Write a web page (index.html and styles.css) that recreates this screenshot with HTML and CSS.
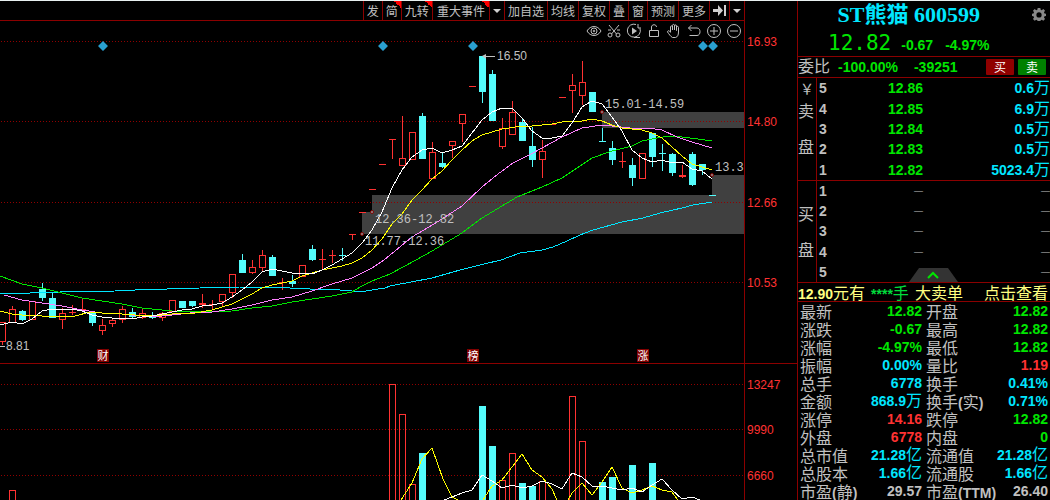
FILE: index.html
```html
<!DOCTYPE html>
<html lang="zh-CN">
<head>
<meta charset="utf-8">
<title>ST熊猫 600599</title>
<link rel="stylesheet" href="styles.css">
</head>
<body>
<div class="app">
  <main class="main">
    <nav class="toolbar">
      <button>发</button>
      <button class="hot">简</button>
      <button class="hot">九转</button>
      <button class="hot wide">重大事件</button>
      <button class="drop" aria-label="更多事件"><svg viewBox="0 0 8 4"><path d="M0 0h8L4 4z"/></svg></button>
      <button>加自选</button>
      <button>均线</button>
      <button>复权</button>
      <button>叠</button>
      <button>窗</button>
      <button>预测</button>
      <button>更多</button>
      <button class="jump" aria-label="跳到末尾"><svg viewBox="0 0 13 11"><path d="M0 4h5V0l5 5.500-5 5.500V7H0zM11 0h2v11h-2z"/></svg></button>
      <button class="drop" aria-label="展开"><svg viewBox="0 0 8 4"><path d="M0 0h8L4 4z"/></svg></button>
    </nav>

    <section class="price">
      <svg class="chart" viewBox="0 21 797 342">
        <g class="gap">
          <path d="M602 112h142v16H602zM712 175h32v20h-32zM372 195h372v39H362v-22h10z"/>
        </g>
        <g class="grid"><path d="M1 41.500H744M1 121.500H744M1 202.500H744M1 282.500H744"/></g>
        <g id="candles"></g>
        <g class="ma">
          <polyline class="c60" points="0,294 30,293 60,292 115,291 135,290 200,288 240,287 265,287 290,288 310,289 340,290 352,291 366,291 372,290 385,288 390,286 432,278 460,270 480,265 501,260 520,253 542,250 553,247 567,241 580,235 593,230 622,222 643,218 660,213 682,208 693,205 712,202"/>
          <polyline class="c30" points="0,276 22,284 42,288 62,293 82,298 102,301 122,304 142,308 172,311 190,312 232,311 252,308 272,306 292,302 312,299 332,296 352,292 362,286 372,281 390,274 416,260 432,251 442,245 462,233 482,218 502,206 517,197 542,187 562,178 580,166 592,158 612,151 632,146 642,141 652,139 668,136 682,137 698,139 712,141"/>
          <polyline class="c20" points="4,295 22,300 42,303 62,306 82,310 102,313 122,314 142,316 162,316 172,315 190,313 212,312 232,309 252,305 272,300 292,297 312,291 332,284 352,278 372,268 384,260 412,237 434,224 462,206 482,187 498,174 513,163 533,153 542,148 562,137 582,128 602,125 612,126 630,128 647,128 662,130 677,137 692,142 712,148"/>
          <polyline class="c10" points="0,311 12,314 22,315 42,316 62,317 75,316 90,312 102,313 122,314 135,315 152,316 172,314 195,313 212,310 222,307 232,304 242,299 252,294 262,288 272,285 282,283 292,281 302,276 312,273 322,270 332,268 342,266 352,263 362,258 372,250 382,239 392,224 402,214 412,200 422,190 432,179 442,171 452,160 462,150 472,141 482,135 502,129 522,126 532,126 542,125 552,124 562,122 582,121 592,119 602,121 612,125 622,128 632,129 642,130 652,133 662,138 672,147 682,156 692,164 702,167 712,170"/>
          <polyline class="c5" points="0,325 12,322 22,324 32,319 42,311 52,309 62,310 72,309 82,311 92,315 102,317 112,318 122,318 132,319 142,317 152,316 162,314 172,312 182,310 192,309 202,306 212,305 222,303 232,297 242,290 252,282 262,272 272,269 282,271 292,273 302,273 312,274 322,270 332,265 342,259 352,253 362,243 372,230 382,212 392,188 402,170 412,157 422,150 432,148 442,153 452,150 462,146 472,133 482,120 492,112 502,108 512,108 522,118 532,131 542,138 552,138 562,136 572,123 582,107 592,101 602,104 612,117 622,131 632,150 642,158 652,162 662,160 672,163 682,162 692,169 702,171 712,179"/>
        </g>
        <g class="dots">
          <circle cx="362" cy="234" r="1.500"/><circle cx="372" cy="212" r="1.500"/><circle cx="602" cy="112" r="1.500"/><circle cx="712" cy="175" r="1.500"/>
        </g>
        <g class="diamonds">
          <path d="M103 41l5 5-5 5-5-5zM383 41l5 5-5 5-5-5zM473 41l5 5-5 5-5-5zM703 41l5 5-5 5-5-5zM713 41l5 5-5 5-5-5z"/>
        </g>
        <g class="mark"><path class="lead" d="M484 56.500h11M0 346.500h5"/><path d="M482 56l4-2v5z"/>
          <text x="497" y="60">16.50</text><text x="6" y="350">8.81</text></g>
        <g class="gap-label">
          <text x="605" y="108">15.01-14.59</text><text x="375" y="223">12.36-12.82</text><text x="365" y="245">11.77-12.36</text><text x="715" y="171">13.3</text>
        </g>
        <g class="events">
          <path d="M97 349h12v13H97zM467 349h12v13h-12zM637 349h12v13h-12z"/>
          <text x="103" y="360">财</text><text x="473" y="360">榜</text><text x="643" y="360">涨</text>
        </g>
        <path class="frame" d="M744.500 21V363"/>
        <g class="axis"><text x="747" y="46">16.93</text><text x="747" y="126">14.80</text><text x="747" y="207">12.66</text><text x="747" y="287">10.53</text></g>
      </svg>
      <div class="tools">
        <button aria-label="显示"><svg viewBox="0 0 16 16"><path d="M1 8c3.500-6 10.500-6 14 0-3.500 6-10.500 6-14 0z"/><circle cx="8" cy="8" r="3"/><circle cx="8" cy="8" r=".8"/></svg></button>
        <button aria-label="剪切"><svg viewBox="0 0 16 16"><path d="M3 2l7.500 9M13 2L5.500 11M2 7h3M11 7h3"/><circle cx="4" cy="12" r="2"/><circle cx="12" cy="12" r="2"/></svg></button>
        <button aria-label="回放"><svg viewBox="0 0 16 16"><path d="M10 1.500A6.500 6.500 0 1 0 14 5.500M12 1v4h3M8 14.500h6"/><path class="solid" d="M6 4.500v7l5-3.500z"/></svg></button>
        <button aria-label="锁定"><svg viewBox="0 0 16 16"><path d="M3.500 7.500h9v6h-9zM5.500 7.500V4c0-3 5-3 5 0"/></svg></button>
        <button aria-label="拖动"><svg viewBox="0 0 16 16"><path d="M4.500 9V4c0-1.500 2-1.500 2 0v3-4.500c0-1.500 2-1.500 2 0V7 3c0-1.500 2-1.500 2 0v4.500-3c0-1.500 2-1.500 2 0V9c0 3-1 5-3 5.500H6.500C4.500 13.500 3 11 1.500 9c0-2 2-1.500 3 .5"/></svg></button>
        <button aria-label="撤销"><svg viewBox="0 0 16 16"><path d="M5.500 2L2.500 5l3 3M2.500 5H11c4 0 4 7.500 0 7.500H3.500"/></svg></button>
        <button aria-label="放大"><svg viewBox="0 0 16 16"><circle cx="8" cy="8" r="6.500"/><path d="M4 8h8M8 4v8"/></svg></button>
        <button aria-label="缩小"><svg viewBox="0 0 16 16"><circle cx="8" cy="8" r="6.500"/><path d="M4 8h8"/></svg></button>
      </div>
    </section>

    <section class="volume">
      <svg class="chart" viewBox="0 364 797 136">
        <g class="grid"><path d="M1 384.500H744M1 429.500H744M1 475.500H744"/></g>
        <g id="bars"></g>
        <g class="ma">
          <polyline class="c10" points="401,500 412,483 422,459 432,448 443,479 452,497 458,500"/>
          <polyline class="c10" points="483,500 492,486 502,480 522,454 532,470 542,477 552,489 557,500"/>
          <polyline class="c10" points="568,500 572,493 582,483 592,495 602,482 612,467 622,488 632,493 642,490 652,486 662,490 672,492 678,500"/>
          <polyline class="c5" points="444,500 452,497 462,493 472,490 482,475 492,481 502,488 512,485 522,488 532,486 542,481 552,484 562,489 572,473 582,477 592,486 602,486 612,488 622,490 632,488 642,492 652,485 662,479 672,490 682,499 692,497 700,500"/>
        </g>
        <path class="frame" d="M744.500 364V500"/>
        <g class="axis"><text x="747" y="389">13247</text><text x="747" y="434">9990</text><text x="747" y="480">6660</text></g>
      </svg>
    </section>
  </main>

  <aside class="side">
    <header class="quote">
      <h1>ST熊猫 600599</h1>
      <button class="gear" aria-label="设置"><svg viewBox="0 0 16 16"><path fill-rule="evenodd" d="M6.500 1h3l.4 2 1.300.6 1.700-1.200 2 2-1.200 1.700.6 1.300 1.700.3v2.600l-1.700.4-.6 1.300 1.200 1.700-2 2-1.700-1.200-1.300.6-.4 1.900h-3l-.4-1.900-1.300-.6-1.700 1.200-2-2 1.200-1.700-.6-1.300L0 10.300V7.700l1.700-.4.6-1.300-1.200-1.600 2-2 1.700 1.200L6.100 3zM8 6a3 3 0 1 0 0 6 3 3 0 0 0 0-6z"/></svg></button>
      <p class="last"><strong>12.82</strong><span>-0.67</span><span>-4.97%</span></p>
    </header>
    <div class="ratio">
      <span class="name">委比</span><span class="num">-100.00%</span><span class="num">-39251</span>
      <button class="buy">买</button><button class="sell">卖</button>
    </div>
    <section class="book">
      <div class="book-side"><span class="yen">￥</span><span>卖</span><span>盘</span></div>
      <table class="levels">
        <tr><th>5</th><td>12.86</td><td class="qty">0.6<i>万</i></td></tr>
        <tr><th>4</th><td>12.85</td><td class="qty">6.9<i>万</i></td></tr>
        <tr><th>3</th><td>12.84</td><td class="qty">0.5<i>万</i></td></tr>
        <tr><th>2</th><td>12.83</td><td class="qty">0.5<i>万</i></td></tr>
        <tr><th>1</th><td>12.82</td><td class="qty">5023.4<i>万</i></td></tr>
      </table>
    </section>
    <section class="book bids">
      <div class="book-side"><span>买</span><span>盘</span></div>
      <table class="levels">
        <tr><th>1</th><td class="none">—</td><td class="none">—</td></tr>
        <tr><th>2</th><td class="none">—</td><td class="none">—</td></tr>
        <tr><th>3</th><td class="none">—</td><td class="none">—</td></tr>
        <tr><th>4</th><td class="none">—</td><td class="none">—</td></tr>
        <tr><th>5</th><td class="none"></td><td class="none">—</td></tr>
      </table>
      <button class="fold" aria-label="收起"><svg viewBox="0 0 49 14"><path class="tab" d="M0 14L10 0h29l10 14z"/><path class="chev" d="M19 10l5-5 5 5"/></svg></button>
    </section>
    <div class="notice">
      <span><b>12.90</b>元有</span><span class="hands"><b>****</b>手</span><span>大卖单</span><a href="#">点击查看</a>
    </div>
    <table class="stats">
      <tr><th>最新</th><td class="down">12.82</td><th>开盘</th><td class="down">12.82</td></tr>
      <tr><th>涨跌</th><td class="down">-0.67</td><th>最高</th><td class="down">12.82</td></tr>
      <tr><th>涨幅</th><td class="down">-4.97%</td><th>最低</th><td class="down">12.82</td></tr>
      <tr><th>振幅</th><td>0.00%</td><th>量比</th><td class="up">1.19</td></tr>
      <tr><th>总手</th><td>6778</td><th>换手</th><td>0.41%</td></tr>
      <tr><th>金额</th><td>868.9<i>万</i></td><th>换手<b>(</b>实<b>)</b></th><td>0.71%</td></tr>
      <tr><th>涨停</th><td class="up">14.16</td><th>跌停</th><td class="down">12.82</td></tr>
      <tr><th>外盘</th><td class="up">6778</td><th>内盘</th><td class="down">0</td></tr>
      <tr><th>总市值</th><td>21.28<i>亿</i></td><th>流通值</th><td>21.28<i>亿</i></td></tr>
      <tr><th>总股本</th><td>1.66<i>亿</i></td><th>流通股</th><td>1.66<i>亿</i></td></tr>
      <tr><th>市盈<b>(</b>静<b>)</b></th><td class="flat">29.57</td><th>市盈<b>(TTM)</b></th><td class="flat">26.40</td></tr>
    </table>
  </aside>
</div>
<script src="chart.js"></script>
</body>
</html>
```

FILE: styles.css
```css
* { box-sizing: border-box; }
:root {
  --line: #8b0000;
  --grey: #c0c0c0;
  --green: #00e600;
  --cyan: #00e6ff;
  --red: #ff3232;
  --cjk: "Noto Sans CJK SC", sans-serif;
}
body {
  margin: 0;
  background: #000;
  color: var(--grey);
  font-family: "Liberation Sans", var(--cjk);
  overflow: hidden;
}
button {
  margin: 0;
  padding: 0;
  border: 0;
  background: none;
  color: inherit;
  font: inherit;
}
svg { display: block; }
i { font-style: normal; font-weight: 400; font-size: 16px; }
.app { display: flex; border-top: 1px solid #e8f0f0; height: 100vh; overflow: hidden; }
.main { flex: 1; min-width: 0; }

.toolbar {
  display: flex;
  justify-content: flex-end;
  height: 20px;
  margin-right: 52px;
  border-bottom: 1px solid var(--line);
  border-right: 1px solid var(--line);
  font: 12px/19px var(--cjk);
}
.toolbar button {
  display: flex;
  align-items: center;
  padding: 0 3px;
  border-left: 1px solid var(--line);
  white-space: nowrap;
}
.toolbar .wide { padding: 0 4px; }
.toolbar .hot { background: linear-gradient(45deg, transparent 50%, #f00 50%) top right / 7px 7px no-repeat; }
.toolbar svg { fill: #d0d0d0; }
.toolbar .drop svg { width: 8px; height: 4px; }
.toolbar .jump svg { width: 13px; height: 11px; }

.price { position: relative; border-bottom: 1px solid var(--line); }
.chart { width: 100%; height: auto; }
.grid path, .frame, .ma polyline, .rise, .fall, .lead {
  fill: none;
  stroke-width: 1px;
  shape-rendering: crispEdges;
}
.grid path { stroke: #900000; stroke-dasharray: 1 2; }
.frame { stroke: var(--line); }
.gap { fill: #404040; shape-rendering: crispEdges; }
.rise { stroke: var(--red); }
.fall { stroke: #54fcfc; }
.body { fill: #54fcfc; shape-rendering: crispEdges; }
.ma .c5 { stroke: #fff; }
.ma .c10 { stroke: #ff0; }
.ma .c20 { stroke: #ff80ff; }
.ma .c30 { stroke: #00e600; }
.ma .c60 { stroke: #00e6ff; }
.dots { fill: #999; stroke: #800000; stroke-width: 1px; }
.diamonds { fill: #2a9fd0; }
.mark { fill: var(--grey); font: 12px "Liberation Sans", sans-serif; }
.lead { stroke: var(--grey); }
.gap-label { fill: var(--grey); font: 12px "Liberation Mono", monospace; }
.events path { fill: #800000; }
.events text { fill: #fff; font: 11px var(--cjk); text-anchor: middle; }
.axis { fill: var(--red); font: 12px "Liberation Sans", sans-serif; }

.tools {
  position: absolute;
  top: 2px;
  right: 55px;
  display: flex;
  gap: 4px;
}
.tools svg { width: 16px; height: 16px; fill: none; stroke: var(--grey); }
.tools .solid { fill: var(--grey); stroke: none; }

.side {
  flex: 0 0 253px;
  border-left: 1px solid var(--line);
}
.quote { position: relative; height: 56px; border-bottom: 1px solid var(--line); }
h1 {
  margin: 0;
  padding-right: 70px;
  color: var(--cyan);
  font: bold 22px/28px "Liberation Serif", "Noto Sans CJK SC", serif;
  text-align: right;
}
.gear { position: absolute; top: 6px; right: 4px; }
.gear svg { width: 14px; height: 14px; fill: #888; }
.last {
  display: flex;
  align-items: baseline;
  gap: 12px;
  margin: 0;
  padding-left: 30px;
  color: var(--green);
  font: bold 14px/28px "Liberation Sans", sans-serif;
}
.last strong { font: 21px/28px "DejaVu Sans Mono", monospace; margin-right: -2px; }
.ratio {
  display: flex;
  align-items: center;
  height: 21px;
  padding-right: 4px;
  border-bottom: 1px solid var(--line);
  font-size: 16px;
  line-height: 20px;
}
.num { margin-left: 8px; color: var(--green); font: bold 14px/20px "Liberation Sans", sans-serif; }
.num + .num { margin-left: 16px; }
.ratio button {
  width: 28px;
  height: 16px;
  margin-left: 4px;
  border-radius: 1px;
  color: #fff;
  font: 12px/16px var(--cjk);
}
.ratio .buy { margin-left: auto; background: #900000; }
.ratio .sell { background: #008000; }

.book { position: relative; display: flex; min-height: 103px; border-bottom: 1px solid var(--line); }
.book-side {
  display: flex;
  flex-direction: column;
  flex: 0 0 19px;
  gap: 12px;
  padding-top: 2px;
  border-right: 1px solid var(--line);
  font: 16px/24px var(--cjk);
}
.book-side .yen { margin-bottom: -12px; font-size: 14px; line-height: 16px; padding-left: 2px; }
.book-side .yen + span { margin-top: 2px; }
.bids { min-height: 102px; }
.bids .book-side { padding-top: 20px; }
.levels { flex: 1; border-collapse: collapse; table-layout: fixed; }
.levels th, .levels td { height: 20px; padding: 0; font: bold 14px/20px "Liberation Sans", var(--cjk); text-align: right; }
.levels i, .stats i { font-family: var(--cjk); line-height: 0; }
.levels th { width: 20px; padding-left: 2px; text-align: left; }
.levels td { width: 86px; color: var(--green); white-space: nowrap; }
.levels .qty { color: var(--cyan); }
.levels .none { color: var(--grey); font-size: 9px; font-weight: normal; }
.levels td:last-child { width: auto; }
.fold { position: absolute; left: 111px; bottom: 0; }
.fold svg { width: 49px; height: 14px; }
.tab { fill: #333; }
.chev { fill: none; stroke: var(--green); stroke-width: 2px; }

.notice {
  display: flex;
  height: 19px;
  padding-right: 2px;
  border-bottom: 1px solid var(--line);
  color: #ffff80;
  font: 16px/18px var(--cjk);
  white-space: nowrap;
  gap: 6px;
}
.notice b, .stats b { font: bold 14px/1px "Liberation Sans", sans-serif; }
.notice .hands { color: #00dc3c; }
.notice a { margin-left: auto; color: inherit; text-decoration: none; }

.stats { width: 100%; border-collapse: collapse; table-layout: fixed; }
.stats th, .stats td { height: 18px; padding: 0; white-space: nowrap; }
.stats th { width: 64px; padding-left: 2px; font: 16px/18px var(--cjk); text-align: left; }
.stats th + td { width: 60px; }
.stats th + td + th { width: 68px; padding-left: 4px; }
.stats td { color: var(--cyan); font: bold 14px/18px "Liberation Sans", var(--cjk); text-align: right; }
.stats td:last-child { padding-right: 2px; }
.stats .down { color: var(--green); }
.stats .up { color: var(--red); }
.stats .flat { color: var(--grey); }
```

FILE: chart.js
```js
// Each candle: [x, direction, body top, body bottom, high, low]
const candles = [
  [2,'r',322,341,322,344],[12,'r',309,322,306,322],[22,'f',311,320,310,321],[32,'r',301,319,301,319],
  [42,'f',289,298,283,301],[52,'f',298,318,293,318],[62,'r',313,319,308,328],[72,'r',312,312,305,314],
  [82,'r',309,309,298,309],[92,'f',312,323,312,326],[102,'r',325,330,319,334],[112,'r',320,323,318,326],
  [122,'r',309,319,306,322],[132,'f',312,317,308,319],[142,'r',313,317,309,318],[152,'f',316,318,312,319],
  [162,'r',313,317,312,320],[172,'r',300,311,300,311],[182,'f',301,308,301,308],[192,'f',301,306,301,307],
  [202,'r',303,304,294,307],[212,'r',304,304,300,308],[222,'r',294,301,294,305],[232,'r',274,292,274,297],
  [242,'f',260,273,254,273],[252,'r',267,272,260,273],[262,'r',255,267,250,271],[272,'f',257,276,255,276],
  [282,'r',282,282,278,289],[292,'f',281,284,275,287],[302,'r',265,276,265,276],[312,'f',249,260,245,261],
  [322,'r',259,259,249,268],[332,'r',255,255,250,262],[342,'f',255,256,248,261],[352,'r',234,234,234,239],
  [362,'r',212,212,212,212],[372,'r',189,189,189,189],[382,'r',164,164,164,164],[392,'r',139,139,139,158],
  [402,'r',158,165,116,165],[412,'r',132,159,132,159],[422,'f',116,159,113,159],[432,'r',152,178,142,178],
  [442,'f',163,167,153,168],[452,'r',141,145,141,157],[462,'r',114,123,114,141],[472,'r',86,86,86,86],
  [482,'f',56,92,56,103],[492,'f',74,121,70,121],[502,'r',128,146,118,148],[512,'r',112,134,101,134],
  [522,'f',122,141,118,141],[532,'f',146,160,127,167],[542,'r',151,159,140,177],[552,'r',124,124,124,124],
  [562,'r',97,97,97,97],[572,'r',85,90,74,112],[582,'r',82,95,61,104],[592,'f',92,112,92,112],
  [602,'f',141,142,128,141],[612,'f',148,160,141,165],[622,'r',161,161,152,167],[632,'f',165,178,158,186],
  [642,'r',153,178,153,178],[652,'f',133,157,133,167],[662,'f',153,154,144,171],[672,'f',154,173,153,176],
  [682,'r',175,176,165,177],[692,'f',154,185,152,186],[702,'f',164,170,164,175],[712,'f',195,196,195,196]
];

// Each bar: [x, direction, top]
const bars = [
  [12,'r',490],[392,'r',384],[402,'r',414],[412,'r',484],[422,'f',453],[482,'f',406],[492,'f',446],
  [502,'r',480],[512,'r',453],[522,'f',483],[532,'f',486],[542,'r',481],[572,'r',396],[582,'r',441],
  [602,'f',482],[612,'f',477],[632,'f',465],[652,'f',463]
];

const path = (cls, d) => `<path class="${cls}" d="${d}"/>`;

document.getElementById('candles').innerHTML = candles.map(([x, dir, top, bottom, high, low]) => {
  const c = x + 0.5;
  if (dir === 'f') {
    return path('fall', `M${c} ${high}V${low}`) + path('body', `M${x - 3} ${top}h7V${bottom}h-7z`);
  }
  const wicks = bottom - top < 2
    ? `M${c} ${high}V${low + (low > high ? 1 : 0)}`
    : `M${c} ${high}V${top}M${c} ${bottom}V${low + 1}`;
  const body = top === bottom
    ? `M${x - 3} ${top + 0.5}h7`
    : `M${x - 2.5} ${top + 0.5}h6V${bottom + 0.5}h-6z`;
  return path('rise', wicks + body);
}).join('');

document.getElementById('bars').innerHTML = bars.map(([x, dir, top]) => dir === 'f'
  ? path('body', `M${x - 3} ${top}h7V500h-7z`)
  : path('rise', `M${x - 2.5} 501V${top + 0.5}h6V501`)).join('');
```
